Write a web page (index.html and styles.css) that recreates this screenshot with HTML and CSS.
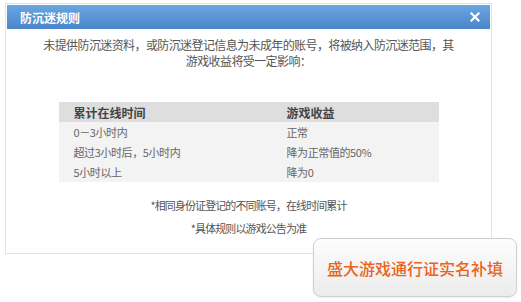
FILE: index.html
```html
<!DOCTYPE html>
<html lang="zh">
<head>
<meta charset="utf-8">
<link rel="stylesheet" href="styles.css">
</head>
<body>
<div class="page">
  <div class="dialog">
    <div class="dialog-head">
      <span class="dialog-title">防沉迷规则</span>
      <svg class="close" width="10" height="10" viewBox="0 0 10 10"><path d="M1.5 1.5 L8.5 8.5 M8.5 1.5 L1.5 8.5" stroke="#fff" stroke-width="2.2" stroke-linecap="square"/></svg>
    </div>
    <div class="dialog-body">
      <p class="intro">未提供防沉迷资料，或防沉迷登记信息为未成年的账号，将被纳入防沉迷范围，其<br>游戏收益将受一定影响：</p>
      <table class="rules">
        <thead>
          <tr><th class="c1">累计在线时间</th><th class="c2">游戏收益</th></tr>
        </thead>
        <tbody>
          <tr><td class="c1">0－3小时内</td><td class="c2">正常</td></tr>
          <tr><td class="c1">超过3小时后，5小时内</td><td class="c2">降为正常值的50%</td></tr>
          <tr><td class="c1">5小时以上</td><td class="c2">降为0</td></tr>
        </tbody>
      </table>
      <p class="note">*相同身份证登记的不同账号，在线时间累计</p>
      <p class="note">*具体规则以游戏公告为准</p>
    </div>
  </div>
  <div class="promo">盛大游戏通行证实名补填</div>
</div>
</body>
</html>
```
FILE: styles.css
```css
html, body {
  margin: 0;
  padding: 0;
  background: #fff;
}
body {
  font-family: "Noto Sans CJK SC", "Noto Sans", sans-serif;
  color: #555;
}
.page {
  position: relative;
  width: 521px;
  height: 302px;
  padding: 3px 0 0 5px;
  box-sizing: border-box;
}
.dialog {
  width: 487px;
  height: 251px;
  box-sizing: border-box;
  border: 1px solid #e3e3e3;
  padding: 1px;
  display: flex;
  flex-direction: column;
}
.dialog-head {
  height: 24px;
  background: linear-gradient(#6aa6e0, #4a85c9);
  display: flex;
  align-items: center;
  justify-content: space-between;
  padding: 0 10px 0 13px;
}
.dialog-title {
  color: #fff;
  font-size: 12px;
  font-weight: bold;
}
.close {
  display: block;
}
.dialog-body {
  display: flex;
  flex-direction: column;
  align-items: center;
  padding-top: 8px;
}
.intro {
  margin: 0;
  font-size: 12px;
  line-height: 16px;
  letter-spacing: -0.6px;
  text-align: center;
  color: #555;
  white-space: nowrap;
}
.rules {
  margin-top: 33px;
  width: 380px;
  border-collapse: collapse;
  background: #f3f3f3;
}
.rules th {
  height: 20px;
  padding: 0;
  background: #dedede;
  font-size: 12px;
  font-weight: bold;
  color: #444;
  text-align: left;
}
.rules td {
  height: 20px;
  padding: 0;
  font-size: 11px;
  letter-spacing: -0.4px;
  color: #666;
  text-align: left;
}
.rules .c1 {
  width: 213px;
  padding-left: 15px;
}
.note {
  margin: 0;
  font-size: 11px;
  line-height: 16px;
  letter-spacing: -0.9px;
  color: #555;
}
.rules + .note {
  margin-top: 15px;
}
.note + .note {
  margin-top: 7px;
}
.promo {
  position: absolute;
  left: 313px;
  top: 238px;
  width: 204px;
  height: 59px;
  box-sizing: border-box;
  border: 1px solid #cfcfcf;
  border-radius: 8px;
  background: linear-gradient(#fdfdfd, #ececec);
  box-shadow: 0 1px 2px rgba(0,0,0,0.08);
  display: flex;
  align-items: center;
  justify-content: center;
  font-size: 16px;
  font-weight: 500;
  color: #ea6420;
}
```
